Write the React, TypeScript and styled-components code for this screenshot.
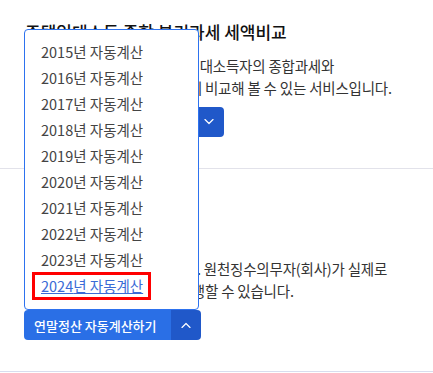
import React from "react";
import styled, { createGlobalStyle } from "styled-components";

const GlobalStyle = createGlobalStyle`
  html, body { margin: 0; padding: 0; background: #ffffff; }
  body { font-family: "Noto Sans CJK KR", "Noto Sans", sans-serif; }
  * { box-sizing: border-box; }
`;

const Page = styled.main`
  width: 433px;
  display: flex;
  flex-direction: column;
`;

const Section = styled.section<{ $padTop: number; $line: string }>`
  padding: ${(p) => p.$padTop}px 24px 31px 24px;
  border-bottom: 1px solid ${(p) => p.$line};
  display: flex;
  flex-direction: column;
  align-items: flex-start;
`;

const Title = styled.h2`
  margin: 0 0 11px 1px;
  font-size: 17px;
  line-height: 24px;
  font-weight: 500;
  color: #111111;
`;

const Desc = styled.p`
  margin: 0 0 8px 1px;
  font-size: 14.5px;
  line-height: 22px;
  letter-spacing: -0.2px;
  color: #333333;
`;

const SplitButton = styled.div`
  position: relative;
  display: flex;
  height: 30px;
`;

const MainButton = styled.button`
  height: 30px;
  padding: 0 14px 0 10px;
  border: none;
  border-radius: 4px 0 0 4px;
  background: #2a6fe6;
  color: #ffffff;
  font-family: inherit;
  font-size: 13px;
  font-weight: 500;
  cursor: pointer;
`;

const ToggleButton = styled.button`
  width: 30px;
  height: 30px;
  padding: 0;
  border: none;
  border-radius: 0 4px 4px 0;
  background: #2058c9;
  display: flex;
  align-items: center;
  justify-content: center;
  cursor: pointer;
`;

const Menu = styled.ul`
  position: absolute;
  left: 0;
  bottom: 100%;
  width: 175px;
  margin: 0;
  padding: 9px 0 10px 0;
  list-style: none;
  background: #ffffff;
  border: 1px solid #2d72ef;
  border-radius: 4px;
  z-index: 10;
`;

const MenuItem = styled.li`
  height: 26px;
  padding-left: 10px;
  display: flex;
  align-items: center;
`;

const ItemLink = styled.a<{ $active?: boolean }>`
  display: inline-block;
  line-height: 22px;
  padding: 0 5px 0 6px;
  font-size: 14.5px;
  color: ${(p) => (p.$active ? "#3a6bd6" : "#444444")};
  text-decoration: ${(p) => (p.$active ? "underline" : "none")};
  outline: ${(p) => (p.$active ? "3px solid #ff0000" : "none")};
  cursor: pointer;
`;

const Chevron = ({ up }: { up?: boolean }) => (
  <svg width="10" height="6" viewBox="0 0 10 6" fill="none">
    <polyline
      points={up ? "1,5.5 5,1.5 9,5.5" : "1,0.5 5,4.5 9,0.5"}
      stroke="#ffffff"
      strokeWidth="1.2"
      strokeLinecap="round"
      strokeLinejoin="round"
    />
  </svg>
);

const years = [2015, 2016, 2017, 2018, 2019, 2020, 2021, 2022, 2023, 2024];

export default function App() {
  return (
    <>
      <GlobalStyle />
      <Page>
        <Section $padTop={20} $line="#e2e2ea">
          <Title>주택임대소득 종합 분리과세 세액비교</Title>
          <Desc>
            수입금액 2천만원 이하 주택임대소득자의 종합과세와
            <br />
            분리과세시의 세액을 한꺼번에 비교해 볼 수 있는 서비스입니다.
          </Desc>
          <SplitButton>
            <MainButton>주택임대소득 세액계산하기</MainButton>
            <ToggleButton aria-label="펼치기">
              <Chevron />
            </ToggleButton>
          </SplitButton>
        </Section>
        <Section $padTop={54} $line="#d8ddee">
          <Title>연말정산 자동계산</Title>
          <Desc>
            2024년 귀속 세액 계산합니다. 원천징수의무자(회사)가 실제로
            <br />
            연말정산을 간편하게 미리 진행할 수 있습니다.
          </Desc>
          <SplitButton>
            <Menu>
              {years.map((y) => (
                <MenuItem key={y}>
                  <ItemLink $active={y === 2024}>{y}년 자동계산</ItemLink>
                </MenuItem>
              ))}
            </Menu>
            <MainButton>연말정산 자동계산하기</MainButton>
            <ToggleButton aria-label="접기">
              <Chevron up />
            </ToggleButton>
          </SplitButton>
        </Section>
      </Page>
    </>
  );
}
